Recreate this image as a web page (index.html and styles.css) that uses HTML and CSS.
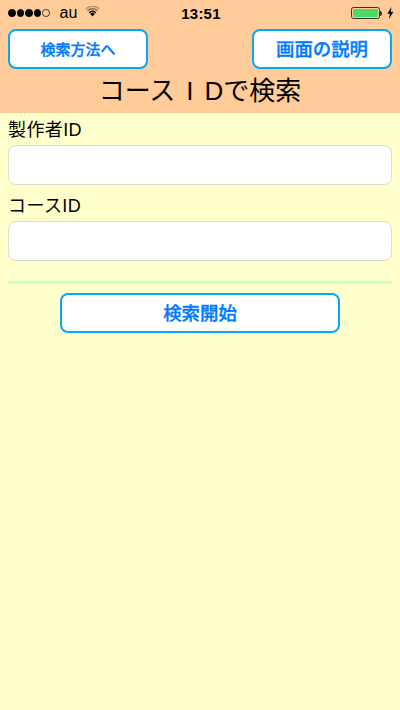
FILE: index.html
```html
<!DOCTYPE html>
<html lang="ja">
<head>
<meta charset="utf-8">
<title>コースIDで検索</title>
<link rel="stylesheet" href="styles.css">
</head>
<body>
<header class="header">
  <div class="status">
    <div class="status-left">
      <span class="signal"><i class="dot"></i><i class="dot"></i><i class="dot"></i><i class="dot"></i><i class="dot empty"></i></span>
      <span class="carrier">au</span>
      <svg class="wifi" width="15" height="11" viewBox="0 0 16 12"><path d="M8 11.5 5.4 8.4a3.9 3.9 0 0 1 5.2 0Z" fill="#000"/><path d="M3.9 6.8a6.2 6.2 0 0 1 8.2 0l-1 1.1a4.7 4.7 0 0 0-6.2 0Z" fill="#000"/><path d="M2 4.6a9 9 0 0 1 12 0l-1 1.2a7.4 7.4 0 0 0-10 0Z" fill="#7c6a52"/><path d="M.2 2.5a11.8 11.8 0 0 1 15.6 0l-1 1.2a10.2 10.2 0 0 0-13.6 0Z" fill="#a8906f"/></svg>
    </div>
    <div class="clock">13:51</div>
    <div class="status-right">
      <span class="battery"><span class="battery-fill"></span></span><span class="battery-cap"></span>
      <svg class="bolt" width="7" height="12" viewBox="0 0 7 12"><path d="M4.4 0 .3 6.8h2.5L2 12l4.4-7.2H3.8Z" fill="#000"/></svg>
    </div>
  </div>
  <div class="nav">
    <button class="btn btn-small" type="button">検索方法へ</button>
    <button class="btn btn-large" type="button">画面の説明</button>
  </div>
  <h1 class="title">コース<span class="title-i">I</span>Dで検索</h1>
</header>
<main class="form">
  <label class="label" for="maker">製作者ID</label>
  <input class="field" id="maker" type="text">
  <label class="label label-second" for="course">コースID</label>
  <input class="field" id="course" type="text">
  <div class="rule"></div>
  <div class="actions">
    <button class="btn btn-search" type="button">検索開始</button>
  </div>
</main>
</body>
</html>
```

FILE: styles.css
```css
* { box-sizing: border-box; }
html, body { margin: 0; padding: 0; height: 100%; }
body {
  width: 400px;
  height: 710px;
  overflow: hidden;
  background: #ffffcc;
  color: #000;
  font-family: "Liberation Sans", "Noto Sans CJK JP", sans-serif;
}
.header { height: 113px; background: #ffcc99; }
.status {
  height: 26px;
  padding: 0 6px 0 8px;
  display: grid;
  grid-template-columns: 1fr auto 1fr;
  align-items: center;
  font-size: 14px;
}
.status-left { display: flex; align-items: center; }
.signal { display: flex; gap: 1px; }
.dot { width: 7.5px; height: 7.5px; border-radius: 50%; background: #000; border: 1px solid #000; }
.dot.empty { background: transparent; border-color: #333; }
.carrier { margin-left: 10px; font-size: 16px; }
.wifi { margin: 0 0 3px 8px; }
.clock { font-weight: 700; font-size: 15px; letter-spacing: 0.2px; }
.status-right { display: flex; align-items: center; justify-content: flex-end; }
.battery {
  width: 29px; height: 12px; padding: 1px;
  border: 1px solid #333; border-radius: 2.5px;
  display: flex;
}
.battery-fill { flex: 1; background: #4cd964; border-radius: 1px; }
.battery-cap { width: 2px; height: 5px; background: #333; border-radius: 0 2px 2px 0; }
.bolt { margin-left: 5px; }
.nav { display: flex; justify-content: space-between; padding: 3px 8px 0; }
.btn {
  height: 40px;
  padding: 0 0 2px;
  background: #fff;
  border: 2.5px solid #03a9f4;
  border-radius: 8px;
  color: #007aff;
  font-family: inherit;
  font-weight: 500;
  -webkit-text-stroke: 0.35px #007aff;
}
.btn-small { width: 140px; font-size: 15px; }
.btn-large { width: 140px; font-size: 18.4px; }
.title {
  margin: 2px 0 0;
  height: 40px;
  line-height: 40px;
  text-align: center;
  font-size: 26px;
  font-weight: 400;
}
.title-i { padding: 0 11px; }
.form { padding: 4px 8px 0; }
.label {
  display: block;
  height: 28px;
  line-height: 26px;
  font-size: 18px;
  letter-spacing: 0.4px;
}
.label-second { margin-top: 8px; }
.field {
  display: block;
  width: 100%;
  height: 40px;
  background: #fff;
  border: 1px solid #dddcc8;
  border-radius: 8px;
  outline: none;
}
.rule { height: 3px; margin-top: 20px; background: #ccffcc; }
.actions { display: flex; justify-content: center; margin-top: 9px; }
.btn-search { width: 280px; font-size: 18.4px; }
```
